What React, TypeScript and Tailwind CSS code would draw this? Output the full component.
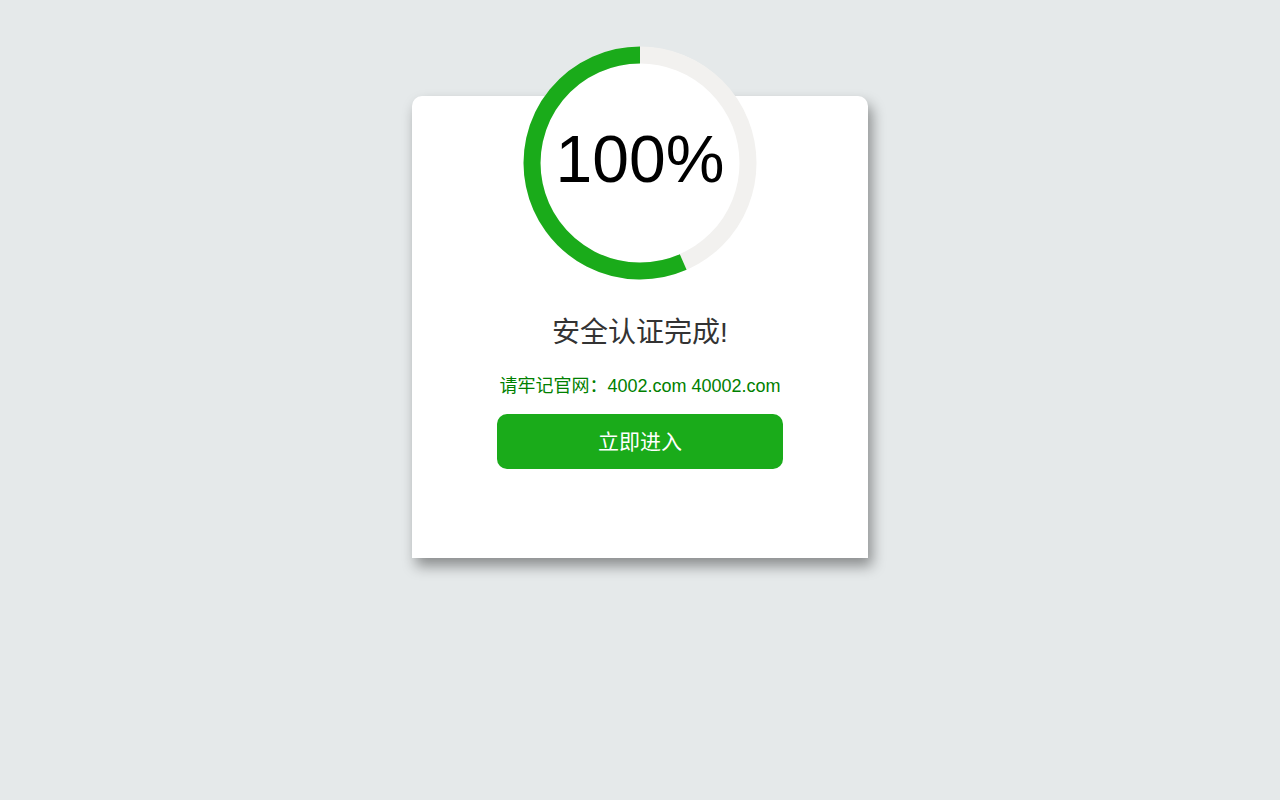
export default function App() {
    return (
        <div
            className="min-h-[800px] w-full bg-[#e5e9ea] pt-[96px]"
            style={{ fontFamily: '"Liberation Sans", Arial, "Noto Sans CJK SC", sans-serif' }}
        >
            <div className="mx-auto w-[456px] h-[462px] bg-white rounded-t-[10px] shadow-[4px_8px_14px_rgba(0,0,0,0.4)] flex flex-col items-center">
                <div className="relative -mt-[50px] w-[234px] h-[234px]">
                    <svg width="234" height="234" viewBox="0 0 234 234">
                        <circle cx="117" cy="117" r="116" fill="#ffffff" />
                        <circle
                            cx="117"
                            cy="117"
                            r="108"
                            fill="none"
                            stroke="#f2f1ef"
                            strokeWidth="17"
                        />
                        <path
                            d="M160.2 216 A108 108 0 1 1 117 9"
                            fill="none"
                            stroke="#1aab1a"
                            strokeWidth="17"
                        />
                    </svg>
                    <div className="absolute inset-0 flex items-center justify-center pb-[8px]">
                        <span className="text-[66px] leading-none text-black">100%</span>
                    </div>
                </div>
                <h2 className="mt-[33px] text-[28px] leading-[40px] text-[#333333]">
                    安全认证完成!
                </h2>
                <p className="mt-[20px] text-[18px] leading-[26px] text-[#008000]">
                    请牢记官网：4002.com 40002.com
                </p>
                <button className="mt-[15px] w-[286px] h-[55px] rounded-[10px] bg-[#1aab1a] text-white text-[21px]">
                    立即进入
                </button>
            </div>
        </div>
    );
}
